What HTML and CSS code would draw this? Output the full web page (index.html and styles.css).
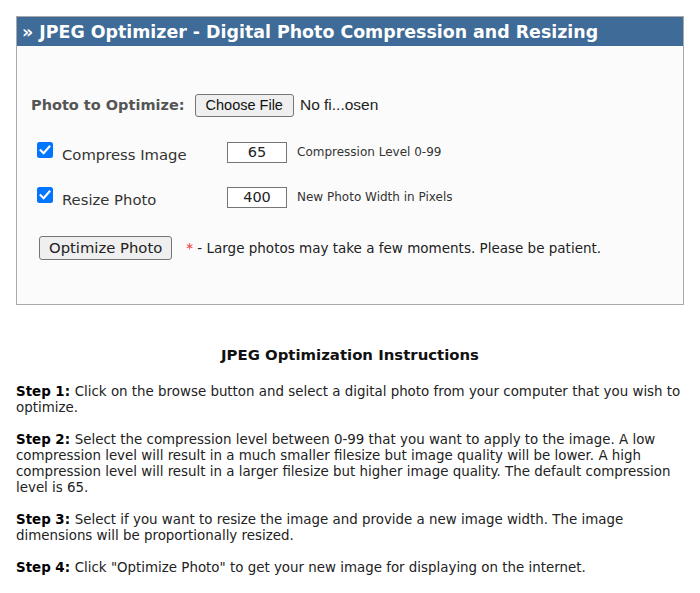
FILE: index.html
```html
<!DOCTYPE html>
<html>
<head>
<meta charset="utf-8">
<link rel="stylesheet" href="styles.css">
</head>
<body>
<div class="page">
  <div class="panel">
    <div class="panel-head">» JPEG Optimizer - Digital Photo Compression and Resizing</div>
    <div class="panel-body">
      <div class="row row-file">
        <span class="file-label">Photo to Optimize:</span>
        <span class="file-btn">Choose File</span>
        <span class="file-name">No fi...osen</span>
      </div>
      <div class="row row-opt">
        <span class="check"><svg viewBox="0 0 16 16" width="16" height="16"><rect x="0" y="0" width="16" height="16" rx="2.5" fill="#0075ff"/><path d="M3.6 8.3 L6.6 11.2 L12.4 4.6" fill="none" stroke="#fff" stroke-width="2.1" stroke-linecap="square"/></svg></span>
        <span class="opt-label">Compress Image</span>
        <span class="num">65</span>
        <span class="hint">Compression Level 0-99</span>
      </div>
      <div class="row row-opt">
        <span class="check"><svg viewBox="0 0 16 16" width="16" height="16"><rect x="0" y="0" width="16" height="16" rx="2.5" fill="#0075ff"/><path d="M3.6 8.3 L6.6 11.2 L12.4 4.6" fill="none" stroke="#fff" stroke-width="2.1" stroke-linecap="square"/></svg></span>
        <span class="opt-label">Resize Photo</span>
        <span class="num">400</span>
        <span class="hint">New Photo Width in Pixels</span>
      </div>
      <div class="row row-submit">
        <span class="submit-btn">Optimize Photo</span>
        <span class="note"><span class="star">*</span> - Large photos may take a few moments. Please be patient.</span>
      </div>
    </div>
  </div>

  <div class="instructions">
    <h2 class="inst-title">JPEG Optimization Instructions</h2>
    <p><b>Step 1: </b>Click on the browse button and select a digital photo from your computer that you wish to optimize.</p>
    <p><b>Step 2: </b>Select the compression level between 0-99 that you want to apply to the image. A low compression level will result in a much smaller filesize but image quality will be lower. A high compression level will result in a larger filesize but higher image quality. The default compression level is 65.</p>
    <p><b>Step 3: </b>Select if you want to resize the image and provide a new image width. The image dimensions will be proportionally resized.</p>
    <p><b>Step 4: </b>Click "Optimize Photo" to get your new image for displaying on the internet.</p>
  </div>
</div>
</body>
</html>
```
FILE: styles.css
```css
html, body {
  margin: 0;
  padding: 0;
  background: #ffffff;
}
body {
  font-family: "DejaVu Sans", Verdana, sans-serif;
  color: #222;
}
.page {
  padding: 16px 16px 0 16px;
}
.panel {
  width: 668px;
  box-sizing: border-box;
  border: 1px solid #a9a9a9;
  background: #fbfbfb;
}
.panel-head {
  background: #3e6b97;
  color: #fff;
  font-weight: bold;
  font-size: 17.4px;
  height: 29px;
  line-height: 31px;
  padding-left: 5px;
  white-space: nowrap;
}
.panel-body {
  padding: 48px 0 44px 0;
  display: flex;
  flex-direction: column;
}
.row {
  display: flex;
  align-items: center;
}
.row-file {
  padding-left: 14px;
  height: 22px;
}
.file-label {
  font-weight: bold;
  color: #555;
  font-size: 14.5px;
  margin-right: 10px;
}
.file-btn {
  font-family: "Liberation Sans", Arial, sans-serif;
  font-size: 14.5px;
  color: #111;
  background: #efefef;
  border: 1px solid #767676;
  border-radius: 3px;
  height: 21px;
  line-height: 21px;
  padding: 0 10px;
}
.file-name {
  font-family: "Liberation Sans", Arial, sans-serif;
  font-size: 15.5px;
  color: #222;
  margin-left: 6px;
}
.row-opt {
  padding-left: 20px;
  height: 22px;
  margin-top: 25px;
}
.row-opt + .row-opt {
  margin-top: 23px;
}
.check {
  width: 16px;
  height: 16px;
  display: flex;
  margin-top: -4px;
}
.opt-label {
  font-size: 14.8px;
  color: #333;
  margin-left: 9px;
  width: 165px;
  margin-top: 4px;
}
.num {
  width: 58px;
  height: 19px;
  border: 1px solid #767676;
  background: #fff;
  text-align: center;
  font-size: 14.5px;
  line-height: 19px;
  color: #222;
}
.hint {
  font-size: 12px;
  color: #333;
  margin-left: 10px;
}
.row-submit {
  padding-left: 22px;
  margin-top: 28px;
  height: 24px;
}
.submit-btn {
  font-size: 14.8px;
  color: #222;
  background: #efefef;
  border: 1px solid #767676;
  border-radius: 3px;
  height: 22px;
  line-height: 22px;
  padding: 0 9px;
}
.note {
  font-size: 13.5px;
  color: #222;
  margin-left: 14px;
}
.star {
  color: #e33;
}
.instructions {
  width: 668px;
  font-size: 13.4px;
  line-height: 16px;
  color: #222;
}
.instructions b {
  color: #000;
}
.inst-title {
  text-align: center;
  font-size: 14.9px;
  font-weight: bold;
  margin: 41px 0 20px 0;
  line-height: 18px;
  color: #111;
}
.instructions p {
  margin: 0 0 16px 0;
}
```
